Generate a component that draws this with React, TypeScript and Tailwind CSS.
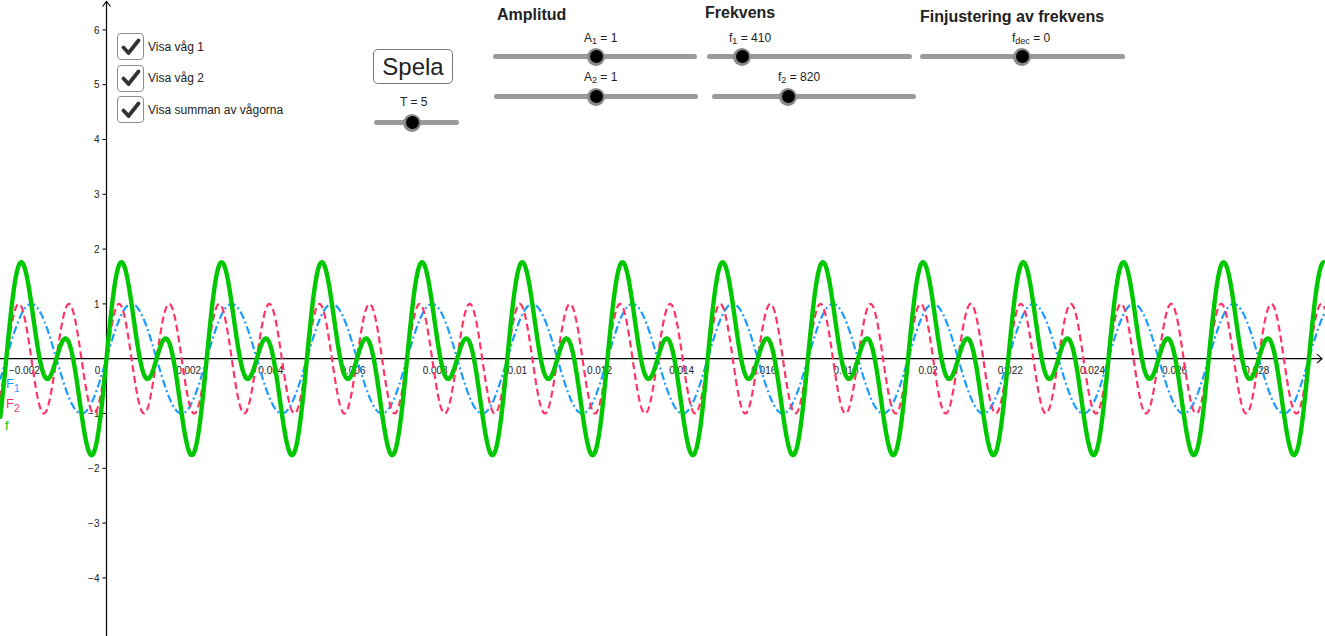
import React from 'react';

// graph canvas: origin and scale read off the screenshot
const W = 1325;
const H = 636;
const OX = 106.5;
const OY = 358.7;
const SX = 41082; // px per x unit
const SY = 54.8; // px per y unit

const A1 = 1;
const A2 = 1;
const F1 = 410;
const F2 = 820;

const wave1 = (x: number) => A1 * Math.sin(2 * Math.PI * F1 * x);
const wave2 = (x: number) => A2 * Math.sin(2 * Math.PI * F2 * x);
const sum = (x: number) => wave1(x) + wave2(x);

function path(fn: (x: number) => number) {
  let d = '';
  for (let px = 0; px <= W; px += 0.5) {
    const x = (px - OX) / SX;
    const py = OY - fn(x) * SY;
    d += (px === 0 ? 'M' : 'L') + px.toFixed(1) + ' ' + py.toFixed(2);
  }
  return d;
}

const fmt = (v: number) => {
  const s = parseFloat(Math.abs(v).toFixed(3)).toString();
  return v < 0 ? '\u2212' + s : s;
};

function Graph() {
  const xTicks: number[] = [];
  for (let k = -1; k <= 14; k++) if (k !== 0) xTicks.push(k);
  const yTicks = [6, 5, 4, 3, 2, 1, -1, -2, -3, -4];

  return (
    <svg width={W} height={H} className="absolute inset-0" style={{ fontFamily: '"Liberation Sans", Arial, sans-serif' }}>
      {/* axes */}
      <line x1={OX} y1={1} x2={OX} y2={H} stroke="#000" strokeWidth={1.2} />
      <polyline points={`${OX - 4},6.5 ${OX},1.5 ${OX + 4},6.5`} fill="none" stroke="#000" strokeWidth={1.1} />
      <line x1={0} y1={OY} x2={1322} y2={OY} stroke="#000" strokeWidth={1.2} />
      <polyline points={`1317,${OY - 4.5} 1322,${OY} 1317,${OY + 4.5}`} fill="none" stroke="#000" strokeWidth={1.1} />

      {yTicks.map((v) => {
        const py = OY - v * SY;
        return (
          <g key={v}>
            <line x1={OX - 4} y1={py} x2={OX} y2={py} stroke="#000" strokeWidth={1} />
            <text x={OX - 7} y={py + 3.6} fontSize={10} textAnchor="end" fill="#222">
              {fmt(v)}
            </text>
          </g>
        );
      })}
      <text x={97.5} y={374} fontSize={10} textAnchor="middle" fill="#222">0</text>
      {xTicks.map((k) => (
        <text key={k} x={OX + k * 0.002 * SX} y={374} fontSize={10} textAnchor="middle" fill="#222">
          {fmt(k * 0.002)}
        </text>
      ))}

      {/* curves */}
      <path d={path(wave1)} fill="none" stroke="#1a9cff" strokeWidth={2.2} strokeDasharray="8 3 2 3" />
      <path d={path(wave2)} fill="none" stroke="#ff3366" strokeWidth={2.2} strokeDasharray="7 4" />
      <path d={path(sum)} fill="none" stroke="#00c800" strokeWidth={4.4} strokeLinejoin="round" />

      {/* curve labels */}
      <text x={6} y={388} fontSize={13} fill="#1a9cff">
        F<tspan fontSize={10} dy={4}>1</tspan>
      </text>
      <text x={6} y={408} fontSize={13} fill="#ff3366">
        F<tspan fontSize={10} dy={4}>2</tspan>
      </text>
      <text x={5} y={430} fontSize={13} fill="#00c800">f</text>
    </svg>
  );
}

function Check({ label }: { label: string }) {
  return (
    <div className="flex items-center gap-[4px]">
      <div className="w-[27px] h-[27px] rounded-[4px] border-[1.5px] border-[#8c8c8c] bg-white flex items-center justify-center">
        <svg width="22" height="22" viewBox="0 0 22 22">
          <path d="M3.5 11.5 L8.5 17 L18.5 4.5" fill="none" stroke="#333" strokeWidth="3.8" strokeLinecap="round" strokeLinejoin="round" />
        </svg>
      </div>
      <span className="text-[12px] leading-none text-[#222]">{label}</span>
    </div>
  );
}

// track with the knob sitting on it
function Track({ cls, knob }: { cls: string; knob: string }) {
  return (
    <div className={`relative h-[5px] rounded-full bg-[#9a9a9a] ${cls}`}>
      <div className={`absolute top-1/2 -translate-x-1/2 -translate-y-1/2 w-[18px] h-[18px] rounded-full bg-[#8a8a8a] flex items-center justify-center ${knob}`}>
        <div className="w-[13px] h-[13px] rounded-full bg-black" />
      </div>
    </div>
  );
}

export default function App() {
  return (
    <div
      className="relative w-[1325px] h-[636px] overflow-hidden bg-white text-[#222]"
      style={{ fontFamily: '"Liberation Sans", Arial, sans-serif' }}
    >
      <Graph />

      {/* checkboxes */}
      <div className="absolute left-[117px] top-[33px] flex flex-col gap-[4.5px]">
        <Check label="Visa våg 1" />
        <Check label="Visa våg 2" />
        <Check label="Visa summan av vågorna" />
      </div>

      {/* play button + T */}
      <div className="absolute left-[373px] top-[49px] flex flex-col">
        <button className="w-[80px] h-[35px] rounded-[5px] border border-[#777] bg-white text-[24px] leading-none text-[#222] flex items-center justify-center">
          Spela
        </button>
        <div className="mt-[12px] pl-[27px] text-[12px] leading-none">T = 5</div>
        <Track cls="mt-[12px] ml-[1px] w-[85px]" knob="left-[38px]" />
      </div>

      {/* Amplitud */}
      <div className="absolute left-[493px] top-[7px] flex flex-col">
        <div className="pl-[4px] text-[16px] font-bold leading-none">Amplitud</div>
        <div className="mt-[9px] pl-[91px] text-[12px] leading-none">
          A<sub>1</sub> = 1
        </div>
        <Track cls="mt-[10px] w-[204px]" knob="left-[103px]" />
        <div className="mt-[12px] pl-[91px] text-[12px] leading-none">
          A<sub>2</sub> = 1
        </div>
        <Track cls="mt-[11px] ml-[1px] w-[204px]" knob="left-[102px]" />
      </div>

      {/* Frekvens */}
      <div className="absolute left-[705px] top-[5px] flex flex-col">
        <div className="text-[16px] font-bold leading-none">Frekvens</div>
        <div className="mt-[11px] pl-[24px] text-[12px] leading-none">
          f<sub>1</sub> = 410
        </div>
        <Track cls="mt-[10px] ml-[2px] w-[205px]" knob="left-[35px]" />
        <div className="mt-[12px] pl-[73px] text-[12px] leading-none">
          f<sub>2</sub> = 820
        </div>
        <Track cls="mt-[11px] ml-[7px] w-[204px]" knob="left-[76px]" />
      </div>

      {/* Finjustering av frekvens */}
      <div className="absolute left-[920px] top-[9px] flex flex-col">
        <div className="text-[16px] font-bold leading-none">Finjustering av frekvens</div>
        <div className="mt-[7px] pl-[92px] text-[12px] leading-none">
          f<sub>dec</sub> = 0
        </div>
        <Track cls="mt-[10px] w-[205px]" knob="left-[102px]" />
      </div>
    </div>
  );
}
